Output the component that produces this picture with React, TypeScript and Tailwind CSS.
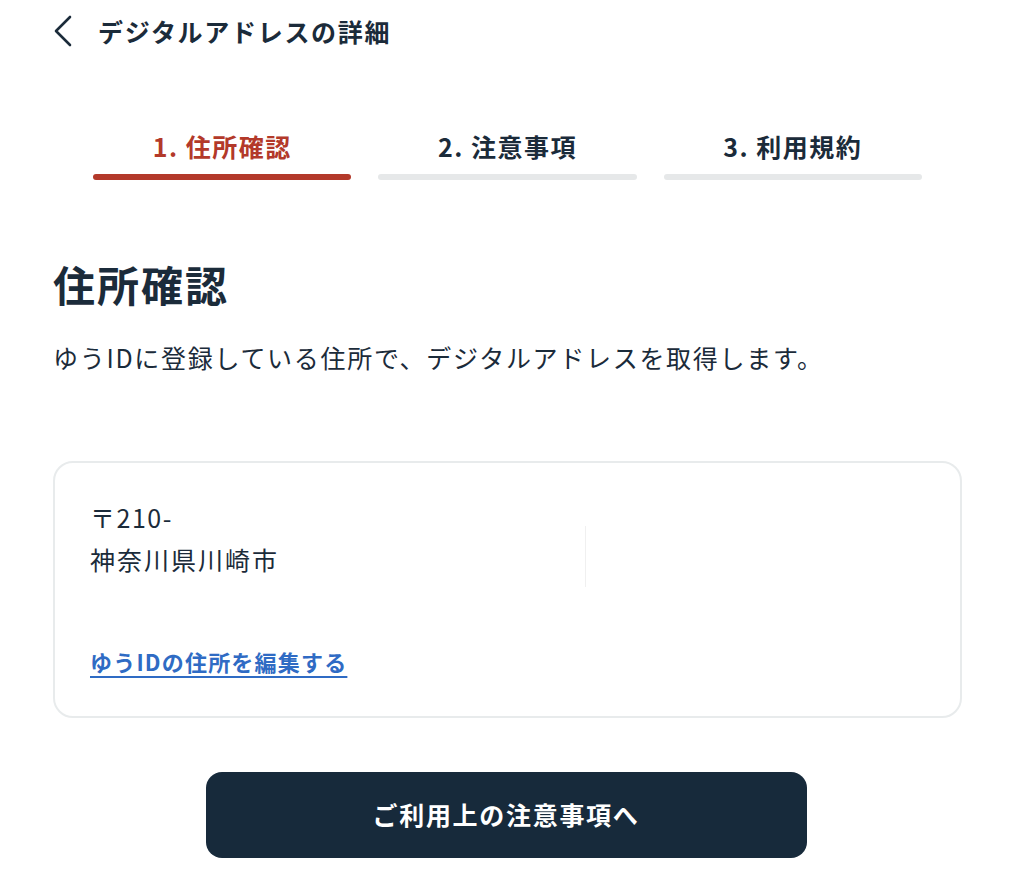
import React from "react";

const font = { fontFamily: '"Noto Sans CJK JP", "Noto Sans", sans-serif' };

const steps = [
  { label: "1. 住所確認", active: true },
  { label: "2. 注意事項", active: false },
  { label: "3. 利用規約", active: false },
];

export default function App() {
  return (
    <div className="min-h-screen w-full bg-white text-[#1b2b3a]" style={font}>
      {/* header */}
      <header className="flex items-center h-[62px] pl-[50px] gap-[22px]">
        <svg width="26" height="34" viewBox="0 0 26 34" fill="none">
          <path d="M20 3 L6 17 L20 31" stroke="#1b2b3a" strokeWidth="2.6" strokeLinecap="round" strokeLinejoin="round" />
        </svg>
        <h1 className="text-[25px] font-bold tracking-[1.7px] leading-none">デジタルアドレスの詳細</h1>
      </header>

      {/* stepper */}
      <div className="grid grid-cols-3 gap-[27px] ml-[93px] mt-[72px] mr-[102px]">
        {steps.map((s) => (
          <div key={s.label} className="flex flex-col items-center">
            <span className={`text-[25px] font-bold leading-none tracking-[1.5px] ${s.active ? "text-[#b3392a]" : "text-[#1b2b3a]"}`}>{s.label}</span>
            <div className={`w-full h-[6px] rounded-full mt-[15px] ${s.active ? "bg-[#b3392a]" : "bg-[#e6e8e9]"}`} />
          </div>
        ))}
      </div>

      <main className="px-[53px] pr-[62px]">
        <h2 className="text-[42px] font-bold leading-none tracking-[2px] mt-[83px]">住所確認</h2>
        <p className="text-[25px] leading-none tracking-[1.7px] mt-[40px]">ゆうIDに登録している住所で、デジタルアドレスを取得します。</p>

        <section className="relative mt-[91px] h-[257px] rounded-[20px] border-2 border-[#e8ebec] px-[35px] pt-[42px]">
          <p className="text-[25px] leading-none tracking-[1.5px]">〒210-</p>
          <p className="text-[25px] leading-none tracking-[2px] mt-[17px]">神奈川県川崎市</p>
          <div className="absolute left-[530px] top-[63px] w-px h-[61px] bg-[#f0f0f0]" />
          <a href="#" className="inline-block mt-[78px] text-[22px] font-bold leading-none tracking-[1.2px] text-[#2f6bc4] underline underline-offset-[5px] decoration-2">
            ゆうIDの住所を編集する
          </a>
        </section>

        <div className="flex justify-center mt-[54px] pr-[3px]">
          <button className="w-[601px] h-[86px] rounded-[16px] bg-[#172a3b] text-white text-[25px] font-bold tracking-[1.7px]">
            ご利用上の注意事項へ
          </button>
        </div>
      </main>
    </div>
  );
}
